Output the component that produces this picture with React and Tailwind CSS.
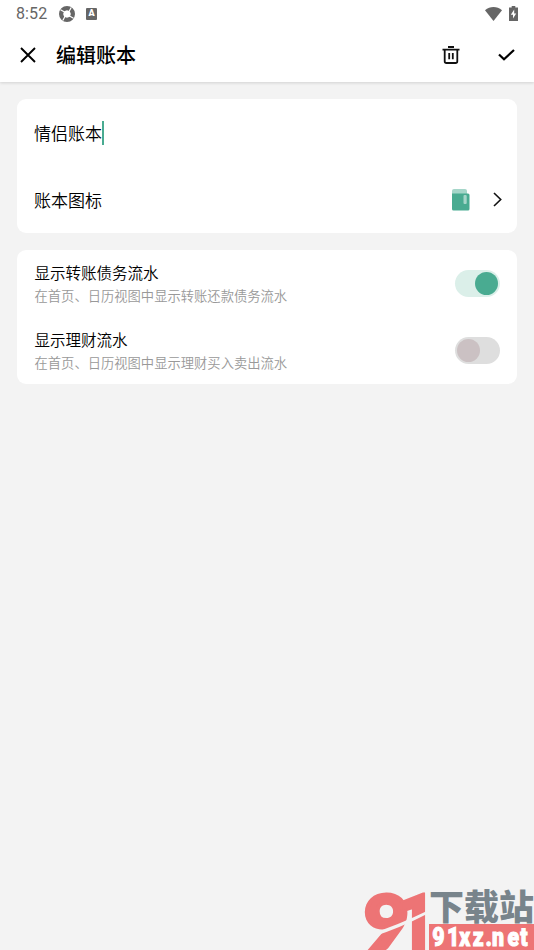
import React, { useState } from "react";

function StatusBar() {
  return (
    <div className="flex h-[27px] items-center justify-between pl-4 pr-4 text-[#666]">
      <div className="flex items-center">
        <span className="w-[43px] font-['Roboto',sans-serif] text-base font-normal tracking-[0.1px]">8:52</span>
        <svg className="h-4 w-4" viewBox="0 0 16 16">
          <circle cx="8" cy="8" r="5.8" fill="none" stroke="#666" strokeWidth="4.4" />
          <path d="M8 4.2L11.8 8L8 11.8L4.2 8Z" fill="#fff" />
          <path d="M1.5 3.8L6 6.2M12.2 1.5L9.8 6M14.5 12.2L10 9.8M3.8 14.5L6.2 10" stroke="#fff" strokeWidth="1.2" />
        </svg>
        <div className="ml-[11px] flex h-[12px] w-[11px] items-center justify-center rounded-[1px] bg-[#666] font-['Roboto',sans-serif] text-[9px] font-black leading-none text-white">
          A
        </div>
      </div>
      <div className="flex items-center gap-[7px]">
        <svg className="h-[14px] w-[17px]" viewBox="0 0 17 14" fill="#666">
          <path d="M0 3.2C5-1 12-1 17 3.2L8.5 14Z" />
        </svg>
        <svg className="h-[15px] w-[9px]" viewBox="0 0 9 15">
          <path d="M2.7 0H6.3V1.5H9V15H0V1.5H2.7Z" fill="#666" />
          <path d="M5.2 3.5L1.8 8.8H4V12.6L7.2 7.4H5.2Z" fill="#fff" />
        </svg>
      </div>
    </div>
  );
}

function Header() {
  return (
    <header className="h-[82px] bg-white shadow-[0_1px_3px_rgba(0,0,0,0.14)]">
      <StatusBar />
      <div className="flex h-[55px] items-center pl-5 pr-5">
        <svg className="h-4 w-4" viewBox="0 0 16 16" fill="none" stroke="#000" strokeWidth="1.9">
          <path d="M1 1L15 15M15 1L1 15" />
        </svg>
        <h1 className="ml-5 flex-1 text-xl font-medium text-black">编辑账本</h1>
        <svg className="h-[18px] w-[18px]" viewBox="0 0 18 18" fill="none" stroke="#111" strokeWidth="1.8">
          <path d="M0.5 3.7H17.5M6 1H12M2.7 3.7V15.2Q2.7 17 4.5 17H13.5Q15.3 17 15.3 15.2V3.7M7.2 7V13.3M10.8 7V13.3" />
        </svg>
        <svg className="-mr-[1px] ml-[38px] h-3 w-[17px]" viewBox="0 0 17 12" fill="none" stroke="#000" strokeWidth="2.2">
          <path d="M1 5.5L6 10.3L16 1" />
        </svg>
      </div>
    </header>
  );
}

function SwitchRow({ title, desc, checked, onChange }) {
  return (
    <div className="flex h-[67px] items-center justify-between">
      <div className="pl-[0.5px]">
        <p className="text-[15.5px] leading-[23px] text-black">{title}</p>
        <p className="text-[13.3px] leading-[23px] text-[#999]">{desc}</p>
      </div>
      <button
        type="button"
        role="switch"
        aria-checked={checked}
        aria-label={title}
        onClick={() => onChange(!checked)}
        className={`flex h-[27px] w-[45px] items-center rounded-full px-[2px] ${
          checked ? "justify-end bg-[#dbefe9]" : "justify-start bg-[#dedede]"
        }`}
      >
        <span className={`h-[23px] w-[23px] rounded-full ${checked ? "bg-[#49ab91]" : "bg-[#cbc1c3]"}`} />
      </button>
    </div>
  );
}

function Watermark() {
  return (
    <svg className="absolute bottom-0 right-0 h-[64px] w-[174px]" viewBox="0 0 174 64">
      <g fill="#ed7475" stroke="#ed7475" fontWeight="900">
        <text x="4" y="62.5" fontFamily="Lato, sans-serif" fontSize="75" strokeWidth="4" textLength="45" lengthAdjust="spacingAndGlyphs">
          9
        </text>
        <text x="36" y="63" fontFamily="Roboto, sans-serif" fontSize="78" strokeWidth="2" textLength="40" lengthAdjust="spacingAndGlyphs">
          1
        </text>
      </g>
      <path d="M10 48Q36 40 67 25L67 28Q40 42 12 51Z" fill="#f3f3f3" />
      <text x="69" y="33.5" fill="#78848b" fontFamily="Noto Sans CJK SC, sans-serif" fontWeight="900" fontSize="35">
        下载站
      </text>
      <rect x="69" y="38" width="105" height="26" fill="#ed7475" />
      <text
        transform="scale(0.82 1)"
        x="88 106 121 137.5 153 161 180 195.5"
        y="60.5"
        fill="#fff"
        stroke="#fff"
        strokeWidth="1"
        fontFamily="Roboto, sans-serif"
        fontWeight="900"
        fontSize="26"
      >
        91xz.net
      </text>
    </svg>
  );
}

export default function App() {
  const [showDebt, setShowDebt] = useState(true);
  const [showFinance, setShowFinance] = useState(false);

  return (
    <div className="relative h-[950px] w-[534px] overflow-hidden bg-[#f3f3f3] font-['Noto_Sans_CJK_SC',sans-serif] font-[350]">
      <Header />
      <main className="flex flex-col gap-[17px] px-[17px] pt-[17px]">
        <section className="h-[134px] rounded-[9px] bg-white px-[17px] text-[17px] text-black">
          <div className="flex h-[67px] items-center">
            <span>情侣账本</span>
            <span className="h-6 w-[2px] bg-[#49ab91]" />
          </div>
          <div className="flex h-[67px] items-center">
            <span className="flex-1">账本图标</span>
            <svg className="h-[22px] w-[18px]" viewBox="0 0 18 22">
              <rect width="15" height="12" rx="2" fill="#a5d6c9" />
              <path d="M0 4.5H16Q17.5 4.5 17.5 6V20Q17.5 21.5 16 21.5H1.5Q0 21.5 0 20Z" fill="#49ab91" />
              <rect x="11.5" y="6" width="3.2" height="9" rx="1" fill="#a5d6c9" />
            </svg>
            <svg className="-mr-[1.5px] ml-[23px] h-[15px] w-[9px]" viewBox="0 0 9 15" fill="none" stroke="#111" strokeWidth="1.6">
              <path d="M1 1L7.7 7.5L1 14" />
            </svg>
          </div>
        </section>
        <section className="h-[134px] rounded-[9px] bg-white px-[17px]">
          <SwitchRow
            title="显示转账债务流水"
            desc="在首页、日历视图中显示转账还款债务流水"
            checked={showDebt}
            onChange={setShowDebt}
          />
          <SwitchRow
            title="显示理财流水"
            desc="在首页、日历视图中显示理财买入卖出流水"
            checked={showFinance}
            onChange={setShowFinance}
          />
        </section>
      </main>
      <Watermark />
    </div>
  );
}
